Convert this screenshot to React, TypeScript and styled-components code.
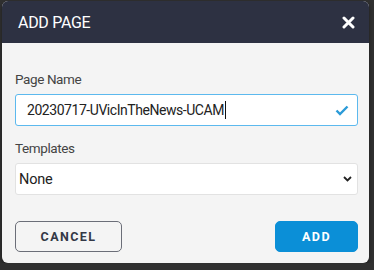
import React from 'react'
import styled, { createGlobalStyle } from 'styled-components'

const Global = createGlobalStyle`
  body {
    margin: 0;
    background: #303030;
    font-family: Roboto, 'Open Sans', sans-serif;
  }
`

const Dialog = styled.div`
  width: 367px;
  margin: 1px 0 0 2px;
  border-radius: 6px;
  overflow: hidden;
  background: #f4f4f4;
  box-shadow: 0 2px 4px rgba(0, 0, 0, 0.4);
`

const Header = styled.div`
  height: 42px;
  background: #2d3142;
  display: flex;
  align-items: center;
  justify-content: space-between;
  padding: 0 14px 0 16px;
  color: #fff;
`

const Title = styled.h2`
  margin: 0;
  font-size: 16px;
  font-weight: 400;
  letter-spacing: -0.3px;
`

const Close = styled.button`
  border: 0;
  background: none;
  padding: 0;
  display: flex;
  cursor: pointer;
`

const Body = styled.div`
  padding: 27px 11px 11px 13px;
  display: flex;
  flex-direction: column;
`

const Label = styled.label<{ $gap?: number }>`
  font-size: 13.5px;
  line-height: 18px;
  letter-spacing: -0.4px;
  color: #444;
  margin-top: ${p => p.$gap ?? 0}px;
  margin-bottom: 6px;
`

const Field = styled.div`
  height: 32px;
  box-sizing: border-box;
  border: 1px solid #5cb9ee;
  border-radius: 3px;
  background: #fff;
  display: flex;
  align-items: center;
  padding: 0 8px 0 11px;
  font-size: 14px;
  letter-spacing: -0.45px;
  color: #222;
`

const Value = styled.span`
  flex: 1;
  display: flex;
  align-items: center;
`

const Caret = styled.span`
  display: inline-block;
  width: 1px;
  height: 18px;
  margin-left: 1px;
  background: #111;
`

const Select = styled.div`
  height: 32px;
  box-sizing: border-box;
  border: 1px solid #e2e2e2;
  border-radius: 3px;
  background: #fff;
  display: flex;
  align-items: center;
  justify-content: space-between;
  padding: 0 5px 0 3px;
  font-size: 14.5px;
  letter-spacing: -0.2px;
  color: #222;
`

const Actions = styled.div`
  display: flex;
  justify-content: space-between;
  margin-top: 26px;
`

const Button = styled.button<{ $primary?: boolean }>`
  height: 31px;
  box-sizing: border-box;
  width: ${p => (p.$primary ? 83 : 107)}px;
  border-radius: 5px;
  font-family: Roboto, 'Open Sans', sans-serif;
  font-size: 12.5px;
  font-weight: 700;
  letter-spacing: 1.4px;
  cursor: pointer;
  border: 1px solid ${p => (p.$primary ? '#0b8fd7' : '#6b6e78')};
  background: ${p => (p.$primary ? '#0b8fd7' : 'transparent')};
  color: ${p => (p.$primary ? '#fff' : '#333846')};
`

export default function App() {
  return (
    <>
      <Global />
      <Dialog>
        <Header>
          <Title>ADD PAGE</Title>
          <Close aria-label="close">
            <svg width="13" height="13" viewBox="0 0 13 13">
              <path d="M2 2 L11 11 M11 2 L2 11" stroke="#fff" strokeWidth="3" strokeLinecap="round" />
            </svg>
          </Close>
        </Header>
        <Body>
          <Label>Page Name</Label>
          <Field>
            <Value>
              20230717-UVicInTheNews-UCAM
              <Caret />
            </Value>
            <svg width="14" height="11" viewBox="0 0 14 11">
              <path d="M1.5 5.5 L5 9 L12.5 1.5" fill="none" stroke="#2b9bd8" strokeWidth="2.4" />
            </svg>
          </Field>
          <Label $gap={13}>Templates</Label>
          <Select>
            <span>None</span>
            <svg width="9" height="6" viewBox="0 0 9 6">
              <path d="M1 1 L4.5 4.5 L8 1" fill="none" stroke="#222" strokeWidth="1.8" />
            </svg>
          </Select>
          <Actions>
            <Button>CANCEL</Button>
            <Button $primary>ADD</Button>
          </Actions>
        </Body>
      </Dialog>
    </>
  )
}
